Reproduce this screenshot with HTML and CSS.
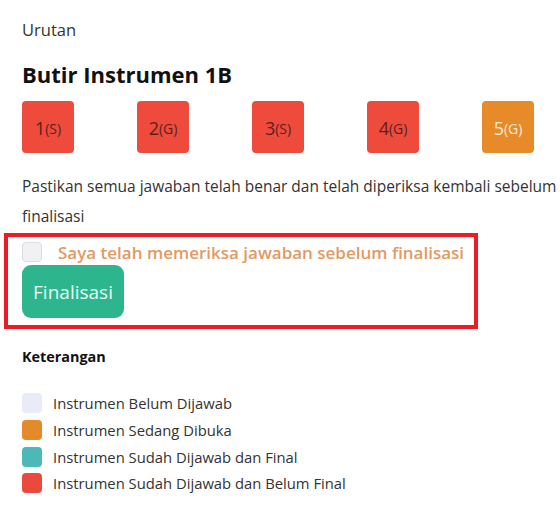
FILE: index.html
```html
<!DOCTYPE html>
<html lang="id">
<head>
<meta charset="utf-8">
<title>Urutan</title>
<link rel="stylesheet" href="styles.css">
</head>
<body>
<div class="page">
  <div class="label">Urutan</div>
  <h1 class="title">Butir Instrumen 1B</h1>
  <div class="boxes">
    <div class="box red">1<sub>(S)</sub></div>
    <div class="box red">2<sub>(G)</sub></div>
    <div class="box red">3<sub>(S)</sub></div>
    <div class="box red">4<sub>(G)</sub></div>
    <div class="box orange">5<sub>(G)</sub></div>
  </div>
  <p class="note">Pastikan semua jawaban telah benar dan telah diperiksa kembali sebelum finalisasi</p>
  <div class="confirm">
    <label class="check-row"><span class="checkbox"></span><span class="check-text">Saya telah memeriksa jawaban sebelum finalisasi</span></label>
    <button class="btn">Finalisasi</button>
    <div class="annot"></div>
  </div>
  <div class="legend-title">Keterangan</div>
  <ul class="legend">
    <li><span class="sw light"></span>Instrumen Belum Dijawab</li>
    <li><span class="sw orange"></span>Instrumen Sedang Dibuka</li>
    <li><span class="sw teal"></span>Instrumen Sudah Dijawab dan Final</li>
    <li><span class="sw red"></span>Instrumen Sudah Dijawab dan Belum Final</li>
  </ul>
</div>
</body>
</html>
```
FILE: styles.css
```css
html, body { margin: 0; padding: 0; background: #fff; }
body {
  font-family: "Open Sans", "Noto Sans", "Liberation Sans", sans-serif;
  color: #222;
  overflow: hidden;
  width: 560px;
  height: 518px;
}
.page { padding: 19px 0 0 22px; width: 538px; overflow: hidden; }
.label { font-size: 16.5px; line-height: 22px; color: #333; }
.title { font-size: 22px; font-weight: 700; line-height: 28px; margin: 19px 0 0; color: #111; }
.boxes { display: flex; gap: 63px; margin-top: 13px; }
.box {
  flex: none;
  width: 52px; height: 52px; border-radius: 4px;
  display: flex; align-items: center; justify-content: center;
  font-size: 18px; color: #5a211b; padding-top: 2px; box-sizing: border-box;
}
.box sub { font-size: 14px; vertical-align: -4px; }
.box.red { background: #ee4b3d; }
.box.orange { background: #e68a2a; color: #fdebd2; }
.note { font-size: 15.5px; line-height: 30px; margin: 18px 0 0; color: #333; width: 580px; }
.confirm { position: relative; }
.check-row { display: flex; align-items: center; height: 22px; margin-top: 10px; }
.checkbox {
  width: 20px; height: 20px; border: 1px solid #dcdce2; border-radius: 4px;
  background: #f1f1f4; margin-right: 16px; box-sizing: border-box; flex: none;
}
.check-text { font-size: 17px; font-weight: 600; color: #e29a62; white-space: nowrap; }
.btn {
  display: block; margin-top: 2px; width: 102px; height: 53px; border: none; border-radius: 9px;
  background: #2db58d; color: #eafff6; font-family: inherit; font-size: 19px; padding: 0;
}
.annot {
  position: absolute; left: -18px; top: -8px; width: 474px; height: 96px;
  border: 4px solid #ed1c24; box-sizing: border-box; pointer-events: none;
}
.legend-title { font-size: 14.4px; font-weight: 700; margin-top: 28px; color: #111; line-height: 22px; }
.legend { list-style: none; margin: 22px 0 0; padding: 0; }
.legend li { display: flex; align-items: center; height: 26.7px; font-size: 14.8px; color: #333; }
.sw { width: 20px; height: 20px; border-radius: 4px; margin-right: 11px; flex: none; }
.sw.light { background: #e9ecf8; }
.sw.orange { background: #e38b2a; }
.sw.teal { background: #4db8b8; }
.sw.red { background: #ea4a3e; }
```
